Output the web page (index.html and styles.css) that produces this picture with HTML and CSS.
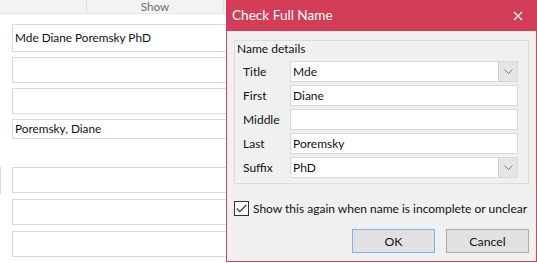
FILE: index.html
```html
<!DOCTYPE html>
<html lang="en">
<head>
    <meta charset="UTF-8">
    <meta name="viewport" content="width=device-width, initial-scale=1.0">
    <title>Check Full Name</title>
    <link rel="stylesheet" href="styles.css">
</head>
<body>
    <div class="form-page">
        <div class="tab-strip">
            <div class="tab-cell tab-first"></div>
            <div class="tab-cell tab-show">Show</div>
            <div class="tab-cell tab-rest"></div>
        </div>

        <div class="field-list">
            <div class="field field-tall">Mde Diane Poremsky PhD</div>
            <div class="field"></div>
            <div class="field"></div>
            <div class="field field-short">Poremsky, Diane</div>
        </div>

        <div class="field-list lower">
            <div class="side-mark"></div>
            <div class="field"></div>
            <div class="field"></div>
            <div class="field"></div>
        </div>
    </div>

    <div class="dialog">
        <div class="dialog-title">
            <span>Check Full Name</span>
            <svg class="close-icon" width="10" height="10" viewBox="0 0 10 10">
                <path d="M1 1 L9 9 M9 1 L1 9" stroke="#ffffff" stroke-width="1.2" fill="none"/>
            </svg>
        </div>

        <div class="dialog-body">
            <div class="group-box">
                <div class="group-label">Name details</div>

                <div class="name-row">
                    <span class="row-label">Title</span>
                    <div class="input combo">
                        <span class="input-text">Mde</span>
                        <span class="combo-btn">
                            <svg width="9" height="5" viewBox="0 0 9 5"><path d="M0.5 0.5 L4.5 4.5 L8.5 0.5" stroke="#7a7a7a" fill="none"/></svg>
                        </span>
                    </div>
                </div>
                <div class="name-row">
                    <span class="row-label">First</span>
                    <div class="input"><span class="input-text">Diane</span></div>
                </div>
                <div class="name-row">
                    <span class="row-label">Middle</span>
                    <div class="input"><span class="input-text"></span></div>
                </div>
                <div class="name-row">
                    <span class="row-label">Last</span>
                    <div class="input"><span class="input-text">Poremsky</span></div>
                </div>
                <div class="name-row">
                    <span class="row-label">Suffix</span>
                    <div class="input combo">
                        <span class="input-text">PhD</span>
                        <span class="combo-btn">
                            <svg width="9" height="5" viewBox="0 0 9 5"><path d="M0.5 0.5 L4.5 4.5 L8.5 0.5" stroke="#7a7a7a" fill="none"/></svg>
                        </span>
                    </div>
                </div>
            </div>

            <label class="check-row">
                <span class="check-box">
                    <svg width="11" height="9" viewBox="0 0 11 9"><path d="M0.8 4.5 L3.8 7.6 L10.2 1" stroke="#333333" stroke-width="1.2" fill="none"/></svg>
                </span>
                <span>Show this again when name is incomplete or unclear</span>
            </label>

            <div class="button-row">
                <button class="dlg-btn default-btn">OK</button>
                <button class="dlg-btn">Cancel</button>
            </div>
        </div>
    </div>
</body>
</html>
```

FILE: styles.css
```css
body {
    margin: 0;
    width: 537px;
    height: 263px;
    overflow: hidden;
    background-color: #ffffff;
    font-family: Lato, "Open Sans", sans-serif;
    font-size: 11.8px;
    color: #111111;
}
.form-page {
    display: flex;
    flex-direction: column;
}
.tab-strip {
    display: flex;
    height: 13px;
    background-color: #f3f3f3;
    border-bottom: 1px solid #e6e6e6;
}
.tab-cell {
    border-right: 1px solid #e0e0e0;
}
.tab-first {
    width: 86px;
}
.tab-show {
    width: 136px;
    text-align: center;
    color: #6d6d6d;
    font-size: 11.7px;
    line-height: 13px;
}
.tab-rest {
    flex: 1;
    border-right: none;
}
.field-list {
    display: flex;
    flex-direction: column;
    gap: 5px;
    padding: 10px 0 0 12px;
    position: relative;
}
.field-list.lower {
    gap: 6px;
    padding-top: 28px;
}
.field {
    width: 260px;
    height: 24px;
    border: 1px solid #dadada;
    padding-left: 2px;
    line-height: 24px;
}
.field-tall {
    height: 26px;
    line-height: 25px;
}
.field-short {
    height: 18px;
    line-height: 18px;
}
.side-mark {
    position: absolute;
    left: 0;
    top: 28px;
    width: 1px;
    height: 27px;
    background-color: #d6d6d6;
}

/* dialog sits on top of the form */
.dialog {
    position: absolute;
    left: 226px;
    top: 0;
    width: 309px;
    height: 261px;
    border: 1px solid #d4435c;
    border-top: none;
    background-color: #f0f0f0;
    font-size: 12px;
    display: flex;
    flex-direction: column;
}
.dialog-title {
    flex-shrink: 0;
    height: 31px;
    background-color: #d43d57;
    color: #ffffff;
    font-size: 13.6px;
    display: flex;
    align-items: center;
    justify-content: space-between;
    padding: 0 14px 0 6px;
    margin: 0 -1px;
}
.dialog-title span {
    margin-top: -1px;
}
.close-icon {
    margin-top: 1px;
}
.dialog-body {
    display: flex;
    flex-direction: column;
    padding: 9px 7px 0 7px;
}
.group-box {
    border: 1px solid #dcdcdc;
    padding: 0 10px 5px 8px;
    display: flex;
    flex-direction: column;
    gap: 3px;
}
.group-label {
    height: 17px;
    line-height: 15px;
    margin-left: -6px;
}
.name-row {
    display: flex;
    align-items: center;
    height: 21px;
}
.row-label {
    width: 47px;
}
.input {
    flex: 1;
    height: 19px;
    background-color: #ffffff;
    border: 1px solid #d9d9d9;
    display: flex;
    align-items: center;
}
.input-text {
    flex: 1;
    padding-left: 2px;
}
.combo-btn {
    width: 18px;
    height: 19px;
    background-color: #e5e5e5;
    border-left: 1px solid #d0d0d0;
    display: flex;
    align-items: center;
    justify-content: center;
}
.check-row {
    display: flex;
    align-items: center;
    gap: 4px;
    margin-top: 17px;
    white-space: nowrap;
}
.check-box {
    width: 13px;
    height: 13px;
    border: 1px solid #333333;
    background-color: #ffffff;
    display: flex;
    align-items: center;
    justify-content: center;
}
.button-row {
    display: flex;
    justify-content: flex-end;
    gap: 11px;
    margin-top: 13px;
}
.dlg-btn {
    width: 83px;
    height: 24px;
    background-color: #e1e1e1;
    border: 1px solid #adadad;
    font-family: Lato, "Open Sans", sans-serif;
    font-size: 12.3px;
    color: #111111;
    padding: 0;
}
.default-btn {
    border-color: #7eb4ea;
}
```
